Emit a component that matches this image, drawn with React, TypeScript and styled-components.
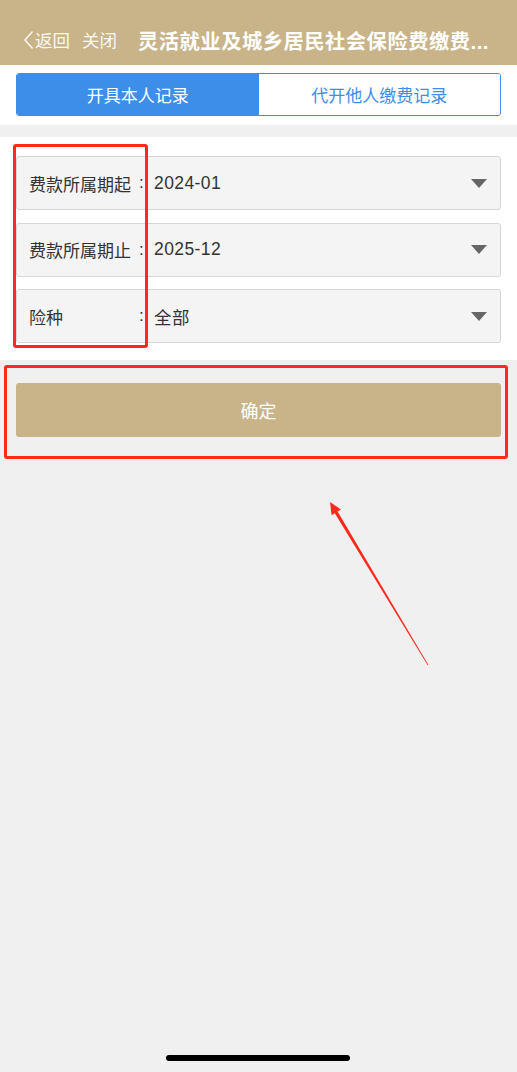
import React from "react";
import styled, { createGlobalStyle } from "styled-components";

const Global = createGlobalStyle`
  html, body { margin: 0; padding: 0; background: #f0f0f0; }
  body { font-family: "Liberation Sans", "Noto Sans CJK SC", sans-serif; }
  * { box-sizing: border-box; }
`;

const Page = styled.div`
  position: relative;
  width: 517px;
  min-height: 1072px;
  background: #f0f0f0;
  display: flex;
  flex-direction: column;
  overflow: hidden;
`;

const Header = styled.header`
  height: 65px;
  padding: 14px 0 0 22px;
  background: #c8b488;
  display: flex;
  align-items: center;
  color: #fff;
  white-space: nowrap;
`;

const NavLink = styled.span`
  display: flex;
  align-items: center;
  font-size: 17.5px;
  color: rgba(255, 255, 255, 0.92);
  margin-right: 12px;
`;

const Title = styled.h1`
  margin: 0 0 0 9px;
  font-size: 20.3px;
  font-weight: bold;
  letter-spacing: 0.5px;
  color: #fff;
`;

const TabsSection = styled.div`
  background: #fff;
  padding: 8px 16px 9px;
`;

const TabBar = styled.div`
  display: grid;
  grid-template-columns: 1fr 1fr;
  height: 43px;
  border: 1px solid #3d8ee8;
  border-radius: 3px;
  overflow: hidden;
`;

const Tab = styled.div<{ $active?: boolean }>`
  display: flex;
  align-items: center;
  justify-content: center;
  font-size: 17px;
  background: ${(p) => (p.$active ? "#3d8ee8" : "#fff")};
  color: ${(p) => (p.$active ? "#fff" : "#3d8ee8")};
`;

const FormSection = styled.div`
  margin-top: 12px;
  background: #fff;
  padding: 19px 16px 17px;
  display: flex;
  flex-direction: column;
  gap: 12.5px;
`;

const Row = styled.div`
  height: 54px;
  background: #f4f4f4;
  border: 1px solid #d6d6d6;
  border-radius: 3px;
  display: flex;
  align-items: center;
  padding: 0 12px 0 12px;
  font-size: 17px;
  color: #333;
`;

const Label = styled.span`
  width: 110px;
  flex: none;
`;

const Colon = styled.span`
  width: 15px;
  flex: none;
`;

const Value = styled.span`
  flex: 1;
  font-size: 17.5px;
  letter-spacing: 0.4px;
`;

const Caret = styled.span`
  width: 0;
  height: 0;
  border-left: 8.5px solid transparent;
  border-right: 8.5px solid transparent;
  border-top: 9px solid #666;
  margin-right: 1px;
`;

const ButtonSection = styled.div`
  padding: 23px 16px;
`;

const ConfirmButton = styled.button`
  width: 100%;
  height: 54px;
  border: none;
  border-radius: 3px;
  background: #c8b488;
  color: #fff;
  font-family: inherit;
  font-size: 18px;
`;

const Annotation = styled.div<{ $l: number; $t: number; $w: number; $h: number }>`
  position: absolute;
  left: ${(p) => p.$l}px;
  top: ${(p) => p.$t}px;
  width: ${(p) => p.$w}px;
  height: ${(p) => p.$h}px;
  border: 3px solid #ff2a1c;
  border-radius: 3px;
  pointer-events: none;
`;

const ArrowSvg = styled.svg`
  position: absolute;
  left: 0;
  top: 0;
  pointer-events: none;
`;

const HomeBar = styled.div`
  position: absolute;
  left: 166px;
  top: 1055px;
  width: 184px;
  height: 6px;
  border-radius: 3px;
  background: #000;
`;

const rows = [
  { label: "费款所属期起", value: "2024-01" },
  { label: "费款所属期止", value: "2025-12" },
  { label: "险种", value: "全部" },
];

export default function App() {
  return (
    <Page>
      <Global />
      <Header>
        <NavLink>
          <svg width="13" height="22" viewBox="0 0 13 22">
            <path d="M10.5 2.5 L3 11 L10.5 19.5" fill="none" stroke="rgba(255,255,255,0.92)" strokeWidth="1.5" />
          </svg>
          返回
        </NavLink>
        <NavLink>关闭</NavLink>
        <Title>灵活就业及城乡居民社会保险费缴费...</Title>
      </Header>
      <TabsSection>
        <TabBar>
          <Tab $active>开具本人记录</Tab>
          <Tab>代开他人缴费记录</Tab>
        </TabBar>
      </TabsSection>
      <FormSection>
        {rows.map((r) => (
          <Row key={r.label}>
            <Label>{r.label}</Label>
            <Colon>:</Colon>
            <Value>{r.value}</Value>
            <Caret />
          </Row>
        ))}
      </FormSection>
      <ButtonSection>
        <ConfirmButton>确定</ConfirmButton>
      </ButtonSection>
      <Annotation $l={13} $t={144} $w={135} $h={204} />
      <Annotation $l={4} $t={365} $w={504} $h={94} />
      <ArrowSvg width="517" height="1072" viewBox="0 0 517 1072">
        <polygon
          points="330,502 341,509.5 337.6,511.6 428.3,664.8 427.7,665.2 334.8,513.3 331.6,515.2"
          fill="#ff2a1c"
        />
      </ArrowSvg>
      <HomeBar />
    </Page>
  );
}
